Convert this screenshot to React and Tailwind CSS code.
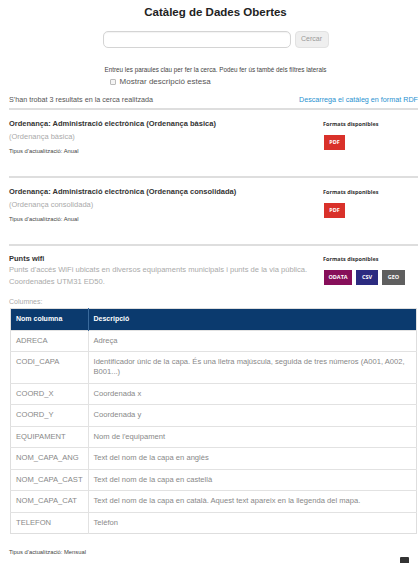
import React from "react";

const columns = [
  ["ADRECA", "Adreça"],
  ["CODI_CAPA", "Identificador únic de la capa. És una lletra majúscula, seguida de tres números (A001, A002, B001...)"],
  ["COORD_X", "Coordenada x"],
  ["COORD_Y", "Coordenada y"],
  ["EQUIPAMENT", "Nom de l'equipament"],
  ["NOM_CAPA_ANG", "Text del nom de la capa en anglès"],
  ["NOM_CAPA_CAST", "Text del nom de la capa en castellà"],
  ["NOM_CAPA_CAT", "Text del nom de la capa en català. Aquest text apareix en la llegenda del mapa."],
  ["TELEFON", "Telèfon"],
];

const Badge = ({ label, color }) => (
  <span
    className={`inline-flex h-[15px] items-center justify-center px-[5px] font-['Open_Sans',sans-serif] text-[5.5px] font-bold text-white ${color}`}
  >
    {label}
  </span>
);

const Formats = ({ children }) => (
  <div className="w-[95px] shrink-0">
    <div className="font-['Open_Sans',sans-serif] text-[5.5px] font-bold leading-[10px] text-[#333]">
      Formats disponibles
    </div>
    <div className="mt-[6px] flex gap-[4px] pl-[1px]">{children}</div>
  </div>
);

const Result = ({ title, subtitle }) => (
  <div className="flex border-t-2 border-[#dedede] pt-[9px] pb-[22px]">
    <div className="flex-1">
      <div className="text-[7.5px] font-bold leading-[10px] text-[#333]">{title}</div>
      <div className="mt-[3px] text-[7.5px] leading-[10px] text-[#aaa]">{subtitle}</div>
      <div className="mt-[6px] text-[5.8px] leading-[6px] text-[#444]">Tipus d'actualització: Anual</div>
    </div>
    <Formats>
      <Badge label="PDF" color="bg-[#d9312a] w-[21px]" />
    </Formats>
  </div>
);

export default function App() {
  return (
    <div className="relative min-h-[563px] overflow-hidden bg-white pl-[9px] pr-[1px] font-['Liberation_Sans',Arial,sans-serif]">
      {/* header + search */}
      <h1 className="pt-[5px] pl-[4px] text-center text-[11.5px] font-bold leading-[14px] text-[#222]">
        Catàleg de Dades Obertes
      </h1>
      <div className="mt-[12px] flex justify-center gap-[4px] pl-[4px]">
        <input
          type="text"
          className="h-[17px] w-[188px] rounded-[5px] border border-[#d4d4d4] bg-white shadow-[inset_0_1px_1px_rgba(0,0,0,0.05)] outline-none"
        />
        <button className="h-[17px] w-[34px] rounded-[4px] border border-[#e2e2e2] bg-[#efefef] text-[7px] text-[#999]">
          Cercar
        </button>
      </div>
      <div className="flex justify-center pl-[4px]">
        <div>
          <p className="mt-[19px] text-[6.3px] leading-[6px] text-[#444]">
            Entreu les paraules clau per fer la cerca. Podeu fer ús també dels filtres laterals
          </p>
          <label className="mt-[4px] flex items-center gap-[4px] pl-[5px] text-[8px] leading-[10px] text-[#555]">
            <span className="h-[6px] w-[6px] rounded-[1px] border border-[#bbb] bg-[#f4f4f4]" />
            Mostrar descripció estesa
          </label>
        </div>
      </div>

      {/* results summary */}
      <div className="mt-[8px] flex items-center justify-between pb-[4px] text-[7.2px] leading-[9px]">
        <span className="text-[#555]">S'han trobat 3 resultats en la cerca realitzada</span>
        <a className="text-[#2a92d0]">Descarrega el catàleg en format RDF</a>
      </div>

      <Result
        title="Ordenança: Administració electrònica (Ordenança bàsica)"
        subtitle="(Ordenança bàsica)"
      />
      <Result
        title="Ordenança: Administració electrònica (Ordenança consolidada)"
        subtitle="(Ordenança consolidada)"
      />

      {/* dataset with column detail */}
      <div className="border-t-2 border-[#dedede] pt-[8px]">
        <div className="flex">
          <div className="flex-1">
            <div className="text-[7.5px] font-bold leading-[10px] text-[#333]">Punts wifi</div>
            <div className="w-[304px] text-[7.6px] leading-[12px] text-[#aaa]">
              Punts d'accés WiFi ubicats en diversos equipaments municipals i punts de la via pública.
              Coordenades UTM31 ED50.
            </div>
          </div>
          <Formats>
            <Badge label="ODATA" color="bg-[#870f5a] w-[28px]" />
            <Badge label="CSV" color="bg-[#2c2b80] w-[22px]" />
            <Badge label="GEO" color="bg-[#5f5f5f] w-[23px]" />
          </Formats>
        </div>
        <div className="mt-[9px] text-[7px] leading-[9px] text-[#aaa]">Columnes:</div>
        <table className="mt-[2px] ml-[1px] w-[407px] border-collapse border border-[#dedede]">
          <thead>
            <tr className="bg-[#0b3a6e] text-left text-[7px] leading-[10px] text-white">
              <th className="w-[76px] border-r border-[#3a6a9c] px-[5px] py-[5.25px] font-bold">Nom columna</th>
              <th className="px-[5px] py-[5.25px] font-bold">Descripció</th>
            </tr>
          </thead>
          <tbody>
            {columns.map(([name, desc]) => (
              <tr key={name} className="border-t border-[#e2e2e2] text-[7.6px] leading-[10px] text-[#888]">
                <td className="border-r border-[#e2e2e2] px-[5px] py-[5.25px] align-top">{name}</td>
                <td className="px-[5px] py-[5.25px] align-top">{desc}</td>
              </tr>
            ))}
          </tbody>
        </table>
        <div className="mt-[15px] text-[5.8px] leading-[6px] text-[#444]">Tipus d'actualització: Mensual</div>
      </div>

      {/* back-to-top button */}
      <div className="absolute top-[557px] left-[400px] h-[10px] w-[9px] rounded-[1px] bg-[#333]" />
    </div>
  );
}
